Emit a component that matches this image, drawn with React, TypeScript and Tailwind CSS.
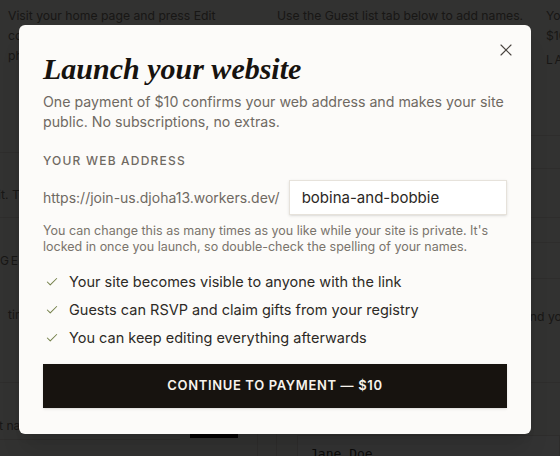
import { Check, X } from 'lucide-react'

const perks = [
  'Your site becomes visible to anyone with the link',
  'Guests can RSVP and claim gifts from your registry',
  'You can keep editing everything afterwards',
]

const Backdrop = () => {
  return (
    <div className="h-[456px] overflow-hidden bg-[#f9f7f3] text-[12.2px] leading-[20px] text-[#7a746c]">
      <div className="grid w-[800px] grid-cols-[254px_254px_254px] gap-x-[15px] px-2 pt-[6px]">
        <div>
          <p>Visit your home page and press Edit</p>
          <p>controls to change your couple</p>
          <p>photos and text.</p>
        </div>
        <div>
          <p>Use the Guest list tab below to add names.</p>
        </div>
        <div>
          <p>Your site is private until launch.</p>
          <p>$10 once</p>
          <p className="mt-[6px] text-[12px] leading-[16px] tracking-[0.15em]">
            LAUNCH
          </p>
        </div>
      </div>

      <div className="mt-[67px] flex">
        <div className="w-[258px] shrink-0 border-r border-[#e6e2db]">
          <div className="h-[17px]" />
          <div className="h-[65px] border-t border-[#e6e2db] pt-[32px]">
            <p className="-ml-[2px]">it. They show up on the page</p>
          </div>
          <div className="h-[165px] border-t border-[#e6e2db]">
            <p className="mt-[35px] text-[12px] leading-[16px] tracking-[0.15em]">
              GENERAL
            </p>
            <p className="mt-[36px] pl-[8px]">time you like</p>
          </div>
          <div className="flex h-[58px] items-end gap-[10px] border-t border-[#e6e2db]">
            <div className="h-[44px] w-[180px] border-b border-[#e6e2db] pt-[20px]">
              <p className="-ml-[1px]">t name</p>
            </div>
            <div className="mb-[2px] h-[18px] w-[48px] bg-[#17130f]" />
          </div>
        </div>
        <div className="w-[18px] shrink-0" />
        <div className="min-w-0 flex-1 border-l border-[#e6e2db] pl-[20px]">
          <div className="h-[33px] border-t border-[#e6e2db]" />
          <div className="h-[49px] border-t border-[#e6e2db]" />
          <div className="h-[25px] border-t border-[#e6e2db]" />
          <div className="h-[36px] border-t border-[#e6e2db]" />
          <div className="h-[104px] border-t border-[#e6e2db] pt-[28px] pl-[226px] whitespace-nowrap">
            <p>and your guests</p>
          </div>
          <div className="h-[53px] border-t border-[#e6e2db]" />
          <div className="border border-[#e6e2db] bg-white px-3 pt-[8px] font-['DejaVu_Sans_Mono',monospace] text-[13px] text-[#3a3631]">
            Jane Doe
          </div>
        </div>
      </div>
    </div>
  )
}

const LaunchModal = () => {
  return (
    <div className="relative w-[512px] rounded-md bg-[#fcfbf9] px-6 pt-6 pb-[26px] shadow-xl">
      <button className="absolute top-[15px] right-[15px] text-[#4a4540]">
        <X size={20} strokeWidth={1.4} />
      </button>

      <h2 className="font-['Liberation_Serif',serif] text-[30px] leading-[40px] font-bold italic text-[#17130f]">
        Launch your website
      </h2>
      <p className="mt-[3px] text-[14.2px] leading-[20px] text-[#6f6962]">
        One payment of $10 confirms your web address and makes your site
        public. No subscriptions, no extras.
      </p>

      <div className="mt-[21px] text-[12px] leading-[16px] font-medium tracking-[0.1em] text-[#6f6962]">
        YOUR WEB ADDRESS
      </div>
      <div className="mt-[11px] flex items-center gap-[9px]">
        <span className="shrink-0 text-[14px] text-[#6f6962]">
          https://join-us.djoha13.workers.dev/
        </span>
        <input
          className="h-[35px] w-full min-w-0 border border-[#e6e2db] bg-white px-3 text-[15px] text-[#2b2724] shadow-sm outline-none"
          defaultValue="bobina-and-bobbie"
        />
      </div>
      <p className="mt-2 text-[12.5px] leading-[16px] text-[#7a746c]">
        You can change this as many times as you like while your site is
        private. It's locked in once you launch, so double-check the spelling
        of your names.
      </p>

      <ul className="mt-[17px] flex flex-col gap-2">
        {perks.map((perk) => (
          <li
            key={perk}
            className="flex items-center gap-[10px] text-[14.5px] leading-[20px] text-[#2d2a26]"
          >
            <Check
              size={14}
              strokeWidth={1.75}
              className="ml-[2px] shrink-0 text-[#74804a]"
            />
            {perk}
          </li>
        ))}
      </ul>

      <button className="mt-4 h-[44px] w-full bg-[#17130f] text-[13px] font-semibold tracking-[0.05em] text-[#f7f3ec] shadow-sm">
        CONTINUE TO PAYMENT — $10
      </button>
    </div>
  )
}

export default function App() {
  return (
    <div className="relative h-[456px] overflow-hidden font-['Inter',sans-serif]">
      <Backdrop />
      <div className="absolute inset-0 flex items-start justify-center bg-black/80 pt-[25px] pr-[10px]">
        <LaunchModal />
      </div>
    </div>
  )
}
